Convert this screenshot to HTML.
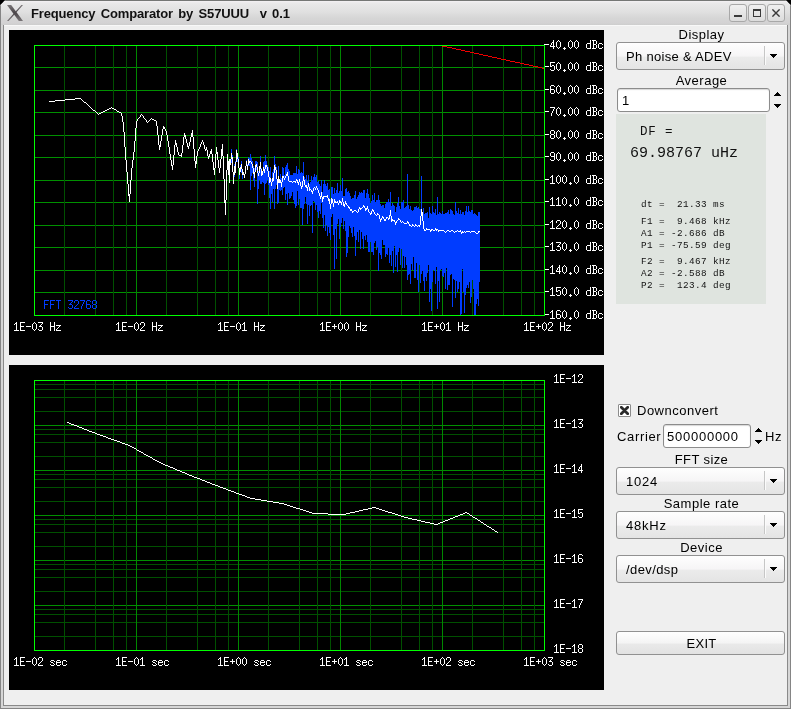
<!DOCTYPE html>
<html><head><meta charset="utf-8"><title>Frequency Comparator by S57UUU v 0.1</title>
<style>
html,body{margin:0;padding:0;background:#000;}
body{width:791px;height:709px;overflow:hidden;position:relative;font-family:"Liberation Sans",sans-serif;font-size:13px;color:#000;}
#win{position:absolute;left:0;top:0;width:791px;height:709px;background:#efefef;overflow:hidden;clip-path:polygon(0 5.5px,5.5px 0,785.5px 0,791px 5.5px,791px 709px,0 709px);}
#tb{position:absolute;left:0;top:0;width:791px;height:25px;background:linear-gradient(#f0eef0 1px,#e8e8e8 4px,#e0e0e0 12px,#d6d6d6 18px,#d3d2d3 23px,#cdcdcd 25px);}
.b{position:absolute;}
.cv{position:absolute;display:block;}
#title{position:absolute;left:30.7px;top:6px;font-weight:bold;font-size:13px;line-height:15px;white-space:pre;letter-spacing:-0.15px;word-spacing:1.9px;color:#111;will-change:transform;}
.wb{position:absolute;top:4px;width:16px;height:16px;border:1px solid #a8a8a8;border-radius:3px;background:linear-gradient(#f0f0f0,#dcdcdc);}
.lab{position:absolute;white-space:pre;line-height:15px;height:15px;will-change:transform;}
.ctr{left:616.5px;width:169px;text-align:center;}
.combo{position:absolute;left:616px;width:167px;height:26px;border:1px solid #919191;border-radius:3px;background:linear-gradient(#fefefe 0,#f6f5f6 50%,#ebebeb 55%,#e4e4e4 100%);}
.combo .t{position:absolute;left:8.8px;top:6px;line-height:15px;white-space:pre;will-change:transform;}
.combo .sep{position:absolute;left:147px;top:3px;width:1px;height:19px;background:#c6c6c6;border-right:1px solid #fbfbfb;}
.combo .ar{position:absolute;left:153px;top:11px;width:7px;height:4px;}
.inp{position:absolute;height:22px;border:1px solid #8c8c8c;border-radius:3px;background:#fff;box-shadow:inset 0 1px 1px #d8d8d8;}
.inp .t{position:absolute;left:4px;top:4px;line-height:15px;white-space:pre;will-change:transform;}
.up,.dn{position:absolute;width:7px;height:4px;}
#info{position:absolute;left:616px;top:114px;width:150px;height:190px;background:#dfe4df;font-family:"Liberation Mono",monospace;color:#111;}
#info div{position:absolute;white-space:pre;will-change:transform;}
.m10{font-size:9.3px;letter-spacing:0.42px;line-height:12px;left:25px;}
</style></head><body>
<svg width="0" height="0" style="position:absolute"><defs><path id="g1" d="M2 2h1v1h-1zM1 3h1v1h-1zM3 3h1v1h-1zM0 4h1v1h-1zM4 4h1v1h-1zM0 5h1v1h-1zM4 5h1v1h-1zM0 6h1v1h-1zM4 6h1v1h-1zM0 7h1v1h-1zM4 7h1v1h-1zM0 8h1v1h-1zM4 8h1v1h-1zM1 9h1v1h-1zM3 9h1v1h-1zM2 10h1v1h-1z"/><path id="g2" d="M2 2h1v1h-1zM1 3h2v1h-2zM0 4h1v1h-1zM2 4h1v1h-1zM2 5h1v1h-1zM2 6h1v1h-1zM2 7h1v1h-1zM2 8h1v1h-1zM2 9h1v1h-1zM0 10h5v1h-5z"/><path id="g3" d="M1 2h3v1h-3zM0 3h1v1h-1zM4 3h1v1h-1zM0 4h1v1h-1zM4 4h1v1h-1zM4 5h1v1h-1zM3 6h1v1h-1zM2 7h1v1h-1zM1 8h1v1h-1zM0 9h1v1h-1zM0 10h5v1h-5z"/><path id="g4" d="M0 2h5v1h-5zM4 3h1v1h-1zM3 4h1v1h-1zM2 5h1v1h-1zM1 6h3v1h-3zM4 7h1v1h-1zM4 8h1v1h-1zM0 9h1v1h-1zM4 9h1v1h-1zM1 10h3v1h-3z"/><path id="g5" d="M3 2h1v1h-1zM3 3h1v1h-1zM2 4h2v1h-2zM1 5h1v1h-1zM3 5h1v1h-1zM1 6h1v1h-1zM3 6h1v1h-1zM0 7h1v1h-1zM3 7h1v1h-1zM0 8h5v1h-5zM3 9h1v1h-1zM3 10h1v1h-1z"/><path id="g6" d="M0 2h5v1h-5zM0 3h1v1h-1zM0 4h1v1h-1zM0 5h1v1h-1zM2 5h2v1h-2zM0 6h2v1h-2zM4 6h1v1h-1zM4 7h1v1h-1zM4 8h1v1h-1zM0 9h1v1h-1zM4 9h1v1h-1zM1 10h3v1h-3z"/><path id="g7" d="M1 2h3v1h-3zM0 3h1v1h-1zM4 3h1v1h-1zM0 4h1v1h-1zM0 5h1v1h-1zM0 6h4v1h-4zM0 7h1v1h-1zM4 7h1v1h-1zM0 8h1v1h-1zM4 8h1v1h-1zM0 9h1v1h-1zM4 9h1v1h-1zM1 10h3v1h-3z"/><path id="g8" d="M0 2h5v1h-5zM4 3h1v1h-1zM3 4h1v1h-1zM3 5h1v1h-1zM2 6h1v1h-1zM2 7h1v1h-1zM1 8h1v1h-1zM1 9h1v1h-1zM1 10h1v1h-1z"/><path id="g9" d="M1 2h3v1h-3zM0 3h1v1h-1zM4 3h1v1h-1zM0 4h1v1h-1zM4 4h1v1h-1zM0 5h1v1h-1zM4 5h1v1h-1zM1 6h3v1h-3zM0 7h1v1h-1zM4 7h1v1h-1zM0 8h1v1h-1zM4 8h1v1h-1zM0 9h1v1h-1zM4 9h1v1h-1zM1 10h3v1h-3z"/><path id="g10" d="M1 2h3v1h-3zM0 3h1v1h-1zM4 3h1v1h-1zM0 4h1v1h-1zM4 4h1v1h-1zM0 5h1v1h-1zM4 5h1v1h-1zM1 6h4v1h-4zM4 7h1v1h-1zM4 8h1v1h-1zM0 9h1v1h-1zM4 9h1v1h-1zM1 10h3v1h-3z"/><path id="g11" d="M2 9h1v1h-1zM1 10h3v1h-3zM2 11h1v1h-1z"/><path id="g12" d="M0 6h5v1h-5z"/><path id="g13" d="M2 4h1v1h-1zM2 5h1v1h-1zM0 6h5v1h-5zM2 7h1v1h-1zM2 8h1v1h-1z"/><path id="g14" d="M0 2h5v1h-5zM0 3h1v1h-1zM0 4h1v1h-1zM0 5h1v1h-1zM0 6h4v1h-4zM0 7h1v1h-1zM0 8h1v1h-1zM0 9h1v1h-1zM0 10h5v1h-5z"/><path id="g15" d="M0 2h5v1h-5zM0 3h1v1h-1zM0 4h1v1h-1zM0 5h1v1h-1zM0 6h4v1h-4zM0 7h1v1h-1zM0 8h1v1h-1zM0 9h1v1h-1zM0 10h1v1h-1z"/><path id="g16" d="M0 2h1v1h-1zM4 2h1v1h-1zM0 3h1v1h-1zM4 3h1v1h-1zM0 4h1v1h-1zM4 4h1v1h-1zM0 5h1v1h-1zM4 5h1v1h-1zM0 6h5v1h-5zM0 7h1v1h-1zM4 7h1v1h-1zM0 8h1v1h-1zM4 8h1v1h-1zM0 9h1v1h-1zM4 9h1v1h-1zM0 10h1v1h-1zM4 10h1v1h-1z"/><path id="g17" d="M0 2h5v1h-5zM2 3h1v1h-1zM2 4h1v1h-1zM2 5h1v1h-1zM2 6h1v1h-1zM2 7h1v1h-1zM2 8h1v1h-1zM2 9h1v1h-1zM2 10h1v1h-1z"/><path id="g18" d="M0 2h4v1h-4zM1 3h1v1h-1zM4 3h1v1h-1zM1 4h1v1h-1zM4 4h1v1h-1zM1 5h1v1h-1zM4 5h1v1h-1zM1 6h3v1h-3zM1 7h1v1h-1zM4 7h1v1h-1zM1 8h1v1h-1zM4 8h1v1h-1zM1 9h1v1h-1zM4 9h1v1h-1zM0 10h4v1h-4z"/><path id="g19" d="M4 2h1v1h-1zM4 3h1v1h-1zM4 4h1v1h-1zM1 5h4v1h-4zM0 6h1v1h-1zM4 6h1v1h-1zM0 7h1v1h-1zM4 7h1v1h-1zM0 8h1v1h-1zM4 8h1v1h-1zM0 9h1v1h-1zM4 9h1v1h-1zM1 10h4v1h-4z"/><path id="g20" d="M1 5h3v1h-3zM0 6h1v1h-1zM4 6h1v1h-1zM0 7h1v1h-1zM0 8h1v1h-1zM0 9h1v1h-1zM4 9h1v1h-1zM1 10h3v1h-3z"/><path id="g21" d="M0 5h5v1h-5zM3 6h1v1h-1zM2 7h1v1h-1zM1 8h1v1h-1zM0 9h1v1h-1zM0 10h5v1h-5z"/><path id="g22" d="M1 5h3v1h-3zM0 6h1v1h-1zM4 6h1v1h-1zM1 7h2v1h-2zM3 8h1v1h-1zM0 9h1v1h-1zM4 9h1v1h-1zM1 10h3v1h-3z"/><path id="g23" d="M1 5h3v1h-3zM0 6h1v1h-1zM4 6h1v1h-1zM0 7h5v1h-5zM0 8h1v1h-1zM0 9h1v1h-1zM4 9h1v1h-1zM1 10h3v1h-3z"/></defs></svg>
<div id="win">
 <div id="tb"></div>
 <!-- frame -->
 <div class="b" style="left:0;top:0;width:791px;height:1px;background:#757775"></div>
 <div class="b" style="left:0;top:1px;width:791px;height:1px;background:#f1eff1"></div>
 <div class="b" style="left:0;top:0;width:1px;height:709px;background:#858585"></div>
 <div class="b" style="left:1px;top:25px;width:2px;height:683px;background:#d6d6d6"></div>
 <div class="b" style="left:3px;top:25px;width:1px;height:681px;background:#8a8a8a"></div>
 <div class="b" style="left:790px;top:0;width:1px;height:709px;background:#858585"></div>
 <div class="b" style="left:788px;top:25px;width:2px;height:683px;background:#d6d6d6"></div>
 <div class="b" style="left:787px;top:25px;width:1px;height:681px;background:#8a8a8a"></div>
 <div class="b" style="left:0;top:708px;width:791px;height:1px;background:#858585"></div>
 <div class="b" style="left:1px;top:706px;width:789px;height:2px;background:#d6d6d6"></div>
 <div class="b" style="left:3px;top:705px;width:785px;height:1px;background:#8a8a8a"></div>
 <div class="b" style="left:4px;top:25px;width:783px;height:1px;background:#f8f8f8"></div>
 <!-- X icon -->
 <svg class="b" style="left:7px;top:5px" width="16" height="16" viewBox="0 0 16 16">
  <defs><linearGradient id="xg" x1="0" y1="0" x2="0" y2="1"><stop offset="0" stop-color="#7a7678"/><stop offset="0.5" stop-color="#4a4548"/><stop offset="1" stop-color="#7a7678"/></linearGradient></defs>
  <path d="M0 0H4.2L16 16H11.8Z" fill="url(#xg)"/>
  <path d="M14.4 0H16L1.6 16H0Z" fill="url(#xg)"/>
 </svg>
 <div id="title">Frequency Comparator by S57UUU  v 0.1</div>
 <!-- window buttons -->
 <div class="wb" style="left:729px"><div class="b" style="left:4px;top:10px;width:8px;height:2px;background:#3a3a3a"></div></div>
 <div class="wb" style="left:748px"><div class="b" style="left:4px;top:4px;width:6px;height:5px;border:1px solid #3a3a3a;border-top-width:2px"></div></div>
 <div class="wb" style="left:767px"><svg class="b" style="left:4px;top:4px" width="8" height="8" viewBox="0 0 8 8"><path d="M0.4 0.4L7.6 7.6M7.6 0.4L0.4 7.6" stroke="#3a3a3a" stroke-width="1.4" fill="none"/></svg></div>

<svg class="cv" style="left:9px;top:30px" width="595" height="325" viewBox="0 0 595 325" shape-rendering="crispEdges"><rect width="595" height="325" fill="#000"/><path fill="#009000" d="M25 37h510v1h-510zM25 60h510v1h-510zM25 82h510v1h-510zM25 105h510v1h-510zM25 127h510v1h-510zM25 150h510v1h-510zM25 172h510v1h-510zM25 195h510v1h-510zM25 217h510v1h-510zM25 240h510v1h-510zM25 262h510v1h-510z"/><path fill="#005000" d="M55 15h1v270h-1zM86 15h1v270h-1zM104 15h1v270h-1zM117 15h1v270h-1zM157 15h1v270h-1zM188 15h1v270h-1zM206 15h1v270h-1zM219 15h1v270h-1zM259 15h1v270h-1zM290 15h1v270h-1zM308 15h1v270h-1zM321 15h1v270h-1zM361 15h1v270h-1zM392 15h1v270h-1zM410 15h1v270h-1zM423 15h1v270h-1zM463 15h1v270h-1zM494 15h1v270h-1zM512 15h1v270h-1zM525 15h1v270h-1z"/><path fill="#008800" d="M127 15h1v270h-1zM229 15h1v270h-1zM331 15h1v270h-1zM433 15h1v270h-1z"/><path fill="#003cff" d="M40 71v1h1v-1zM41 71v1h1v-1zM42 71v1h1v-1zM43 71v1h1v-1zM44 71v1h1v-1zM45 71v1h1v-1zM46 70v1h1v-1zM47 70v1h1v-1zM48 70v1h1v-1zM49 70v1h1v-1zM50 70v1h1v-1zM51 70v1h1v-1zM52 70v1h1v-1zM53 70v1h1v-1zM54 70v1h1v-1zM55 70v1h1v-1zM56 69v1h1v-1zM57 69v1h1v-1zM58 69v1h1v-1zM59 69v1h1v-1zM60 69v1h1v-1zM61 69v1h1v-1zM62 69v1h1v-1zM63 69v1h1v-1zM64 69v1h1v-1zM65 69v1h1v-1zM66 68v1h1v-1zM67 68v1h1v-1zM68 68v1h1v-1zM69 68v1h1v-1zM70 68v1h1v-1zM71 68v1h1v-1zM72 69v1h1v-1zM73 70v1h1v-1zM74 71v1h1v-1zM75 72v1h1v-1zM76 72v1h1v-1zM77 73v1h1v-1zM78 74v1h1v-1zM79 75v1h1v-1zM80 76v1h1v-1zM81 77v1h1v-1zM82 78v1h1v-1zM83 79v1h1v-1zM84 80v1h1v-1zM85 80v1h1v-1zM86 81v1h1v-1zM87 82v1h1v-1zM88 83v1h1v-1zM89 84v1h1v-1zM90 83v1h1v-1zM91 83v1h1v-1zM92 82v1h1v-1zM93 82v1h1v-1zM94 81v1h1v-1zM95 81v1h1v-1zM96 80v1h1v-1zM97 80v1h1v-1zM98 79v1h1v-1zM99 79v1h1v-1zM100 78v1h1v-1zM101 78v1h1v-1zM102 77v1h1v-1zM103 78v1h1v-1zM104 78v1h1v-1zM105 79v1h1v-1zM106 79v1h1v-1zM107 80v1h1v-1zM108 81v1h1v-1zM109 81v1h1v-1zM110 82v1h1v-1zM111 82v1h1v-1zM112 83v3h1v-3zM113 86v6h1v-6zM114 92v10h1v-10zM115 102v15h1v-15zM116 117v13h1v-13zM117 130v12h1v-12zM118 142v12h1v-12zM119 154v12h1v-12zM120 164v8h1v-8zM121 150v14h1v-14zM122 138v12h1v-12zM123 130v8h1v-8zM124 122v8h1v-8zM125 111v11h1v-11zM126 98v13h1v-13zM127 91v7h1v-7zM128 89v2h1v-2zM129 88v1h1v-1zM130 87v1h1v-1zM131 85v2h1v-2zM132 84v1h1v-1zM133 85v1h1v-1zM134 86v2h1v-2zM135 88v1h1v-1zM136 89v1h1v-1zM137 90v2h1v-2zM138 92v1h1v-1zM139 91v1h1v-1zM140 90v1h1v-1zM141 89v1h1v-1zM142 88v1h1v-1zM143 89v1h1v-1zM144 89v1h1v-1zM145 90v1h1v-1zM146 90v1h1v-1zM147 91v5h1v-5zM148 96v9h1v-9zM149 105v10h1v-10zM150 115v5h1v-5zM151 111v6h1v-6zM152 105v6h1v-6zM153 99v6h1v-6zM154 96v3h1v-3zM155 97v2h1v-2zM156 99v2h1v-2zM157 101v4h1v-4zM158 105v6h1v-6zM159 111v6h1v-6zM160 117v7h1v-7zM161 124v6h1v-6zM162 130v6h1v-6zM163 135v5h1v-5zM164 125v10h1v-10zM165 115v10h1v-10zM166 110v5h1v-5zM167 113v4h1v-4zM168 117v5h1v-5zM169 122v3h1v-3zM170 125v1h1v-1zM171 125v1h1v-1zM172 123v4h1v-4zM173 115v8h1v-8zM174 107v8h1v-8zM175 103v4h1v-4zM176 105v4h1v-4zM177 109v4h1v-4zM178 113v4h1v-4zM179 116v3h1v-3zM180 112v4h1v-4zM181 107v5h1v-5zM182 103v4h1v-4zM183 100v7h1v-7zM184 107v12h1v-12zM185 119v12h1v-12zM186 131v7h1v-7zM187 126v8h1v-8zM188 121v5h1v-5zM189 119v2h1v-2zM190 117v2h1v-2zM191 114v3h1v-3zM192 112v2h1v-2zM193 110v2h1v-2zM194 112v3h1v-3zM195 115v4h1v-4zM196 119v2h1v-2zM197 117v3h1v-3zM198 120v6h1v-6zM199 126v3h1v-3zM200 124v3h1v-3zM201 121v3h1v-3zM202 119v5h1v-5zM203 124v8h1v-8zM204 132v8h1v-8zM205 138v7h1v-7zM206 124v14h1v-14zM207 117v7h1v-7zM208 122v8h1v-8zM209 130v8h1v-8zM210 138v5h1v-5zM211 129v9h1v-9zM212 119v10h1v-10zM213 114v12h1v-12zM214 126v23h1v-23zM215 149v24h1v-24zM216 170v15h1v-15zM217 140v30h1v-30zM218 124v16h1v-16zM219 131v14h1v-14zM220 129v24h1v-24zM221 132v3h1v-3zM222 119v14h1v-14zM223 125v17h1v-17zM224 142v12h1v-12zM225 134v13h1v-13zM226 131v12h1v-12zM227 119v12h1v-12zM228 124v8h1v-8zM229 127v11h1v-11zM230 138v11h1v-11zM231 135v5h1v-5zM232 131v12h1v-12zM233 141v8h1v-8zM234 142v3h1v-3zM235 144v4h1v-4zM236 136v8h1v-8zM237 130v6h1v-6zM238 134v6h1v-6zM239 127v9h1v-9zM240 128v8h1v-8zM241 124v36h1v-36zM242 128v18h1v-18zM243 131v12h1v-12zM244 136v15h1v-15zM245 138v19h1v-19zM246 131v11h1v-11zM247 131v9h1v-9zM248 132v42h1v-42zM249 141v18h1v-18zM250 136v14h1v-14zM251 126v28h1v-28zM252 138v16h1v-16zM253 141v11h1v-11zM254 132v21h1v-21zM255 131v34h1v-34zM256 125v29h1v-29zM257 131v22h1v-22zM258 135v15h1v-15zM259 137v18h1v-18zM260 141v27h1v-27zM261 137v42h1v-42zM262 149v15h1v-15zM263 142v30h1v-30zM264 139v20h1v-20zM265 126v53h1v-53zM266 134v25h1v-25zM267 137v18h1v-18zM268 149v25h1v-25zM269 136v37h1v-37zM270 149v11h1v-11zM271 144v17h1v-17zM272 148v12h1v-12zM273 137v28h1v-28zM274 138v20h1v-20zM275 145v12h1v-12zM276 137v33h1v-33zM277 135v29h1v-29zM278 133v42h1v-42zM279 139v24h1v-24zM280 141v28h1v-28zM281 145v23h1v-23zM282 145v21h1v-21zM283 145v17h1v-17zM284 143v27h1v-27zM285 143v31h1v-31zM286 143v35h1v-35zM287 136v40h1v-40zM288 144v17h1v-17zM289 139v36h1v-36zM290 140v29h1v-29zM291 143v35h1v-35zM292 142v36h1v-36zM293 143v52h1v-52zM294 132v47h1v-47zM295 147v27h1v-27zM296 149v18h1v-18zM297 145v29h1v-29zM298 151v43h1v-43zM299 145v30h1v-30zM300 154v32h1v-32zM301 152v24h1v-24zM302 146v29h1v-29zM303 150v53h1v-53zM304 147v24h1v-24zM305 144v28h1v-28zM306 147v33h1v-33zM307 145v30h1v-30zM308 152v30h1v-30zM309 151v37h1v-37zM310 154v27h1v-27zM311 156v28h1v-28zM312 150v23h1v-23zM313 162v26h1v-26zM314 154v44h1v-44zM315 150v35h1v-35zM316 154v47h1v-47zM317 156v39h1v-39zM318 153v53h1v-53zM319 160v37h1v-37zM320 159v44h1v-44zM321 169v41h1v-41zM322 157v30h1v-30zM323 157v27h1v-27zM324 164v41h1v-41zM325 158v81h1v-81zM326 163v36h1v-36zM327 160v69h1v-69zM328 153v41h1v-41zM329 163v26h1v-26zM330 161v48h1v-48zM331 155v42h1v-42zM332 161v32h1v-32zM333 148v40h1v-40zM334 166v33h1v-33zM335 166v25h1v-25zM336 159v42h1v-42zM337 158v69h1v-69zM338 162v61h1v-61zM339 161v46h1v-46zM340 163v33h1v-33zM341 166v32h1v-32zM342 169v34h1v-34zM343 168v39h1v-39zM344 168v29h1v-29zM345 165v41h1v-41zM346 161v65h1v-65zM347 169v41h1v-41zM348 167v35h1v-35zM349 165v47h1v-47zM350 162v38h1v-38zM351 163v56h1v-56zM352 162v40h1v-40zM353 163v46h1v-46zM354 160v59h1v-59zM355 160v46h1v-46zM356 168v42h1v-42zM357 163v42h1v-42zM358 159v53h1v-53zM359 164v58h1v-58zM360 168v54h1v-54zM361 173v39h1v-39zM362 171v51h1v-51zM363 165v57h1v-57zM364 170v55h1v-55zM365 163v50h1v-50zM366 172v39h1v-39zM367 170v50h1v-50zM368 170v47h1v-47zM369 165v76h1v-76zM370 170v53h1v-53zM371 174v51h1v-51zM372 176v53h1v-53zM373 175v35h1v-35zM374 175v40h1v-40zM375 178v37h1v-37zM376 174v53h1v-53zM377 172v52h1v-52zM378 172v53h1v-53zM379 169v49h1v-49zM380 172v61h1v-61zM381 162v63h1v-63zM382 176v60h1v-60zM383 173v48h1v-48zM384 175v68h1v-68zM385 176v40h1v-40zM386 182v55h1v-55zM387 177v48h1v-48zM388 173v69h1v-69zM389 167v55h1v-55zM390 176v42h1v-42zM391 179v56h1v-56zM392 172v47h1v-47zM393 172v66h1v-66zM394 170v56h1v-56zM395 178v60h1v-60zM396 177v50h1v-50zM397 176v59h1v-59zM398 144v106h1v-106zM399 175v70h1v-70zM400 179v65h1v-65zM401 176v78h1v-78zM402 180v54h1v-54zM403 181v59h1v-59zM404 180v47h1v-47zM405 177v71h1v-71zM406 177v71h1v-71zM407 176v57h1v-57zM408 178v72h1v-72zM409 177v85h1v-85zM410 179v56h1v-56zM411 179v74h1v-74zM412 146v98h1v-98zM413 182v59h1v-59zM414 178v73h1v-73zM415 184v77h1v-77zM416 183v64h1v-64zM417 183v68h1v-68zM418 182v61h1v-61zM419 188v47h1v-47zM420 177v95h1v-95zM421 183v76h1v-76zM422 184v97h1v-97zM423 176v76h1v-76zM424 182v58h1v-58zM425 183v58h1v-58zM426 179v75h1v-75zM427 185v52h1v-52zM428 167v112h1v-112zM429 184v67h1v-67zM430 182v90h1v-90zM431 183v57h1v-57zM432 184v55h1v-55zM433 181v65h1v-65zM434 184v63h1v-63zM435 184v59h1v-59zM436 183v76h1v-76zM437 183v55h1v-55zM438 182v78h1v-78zM439 180v75h1v-75zM440 184v71h1v-71zM441 179v66h1v-66zM442 180v64h1v-64zM443 181v96h1v-96zM444 184v65h1v-65zM445 185v65h1v-65zM446 172v96h1v-96zM447 181v70h1v-70zM448 183v79h1v-79zM449 178v81h1v-81zM450 184v68h1v-68zM451 180v106h1v-106zM452 184v100h1v-100zM453 182v57h1v-57zM454 182v80h1v-80zM455 185v98h1v-98zM456 181v84h1v-84zM457 176v82h1v-82zM458 182v73h1v-73zM459 176v82h1v-82zM460 181v71h1v-71zM461 182v91h1v-91zM462 180v87h1v-87zM463 180v70h1v-70zM464 184v75h1v-75zM465 183v103h1v-103zM466 184v102h1v-102zM467 185v89h1v-89zM468 186v83h1v-83zM469 182v94h1v-94zM470 182v70h1v-70z"/><path fill="#fff" d="M40 71v1h1v-1zM41 71v1h1v-1zM42 71v1h1v-1zM43 71v1h1v-1zM44 71v1h1v-1zM45 71v1h1v-1zM46 70v1h1v-1zM47 70v1h1v-1zM48 70v1h1v-1zM49 70v1h1v-1zM50 70v1h1v-1zM51 70v1h1v-1zM52 70v1h1v-1zM53 70v1h1v-1zM54 70v1h1v-1zM55 70v1h1v-1zM56 69v1h1v-1zM57 69v1h1v-1zM58 69v1h1v-1zM59 69v1h1v-1zM60 69v1h1v-1zM61 69v1h1v-1zM62 69v1h1v-1zM63 69v1h1v-1zM64 69v1h1v-1zM65 69v1h1v-1zM66 68v1h1v-1zM67 68v1h1v-1zM68 68v1h1v-1zM69 68v1h1v-1zM70 68v1h1v-1zM71 68v1h1v-1zM72 69v1h1v-1zM73 70v1h1v-1zM74 71v1h1v-1zM75 72v1h1v-1zM76 72v1h1v-1zM77 73v1h1v-1zM78 74v1h1v-1zM79 75v1h1v-1zM80 76v1h1v-1zM81 77v1h1v-1zM82 78v1h1v-1zM83 79v1h1v-1zM84 80v1h1v-1zM85 80v1h1v-1zM86 81v1h1v-1zM87 82v1h1v-1zM88 83v1h1v-1zM89 84v1h1v-1zM90 83v1h1v-1zM91 83v1h1v-1zM92 82v1h1v-1zM93 82v1h1v-1zM94 81v1h1v-1zM95 81v1h1v-1zM96 80v1h1v-1zM97 80v1h1v-1zM98 79v1h1v-1zM99 79v1h1v-1zM100 78v1h1v-1zM101 78v1h1v-1zM102 77v1h1v-1zM103 78v1h1v-1zM104 78v1h1v-1zM105 79v1h1v-1zM106 79v1h1v-1zM107 80v1h1v-1zM108 81v1h1v-1zM109 81v1h1v-1zM110 82v1h1v-1zM111 82v1h1v-1zM112 83v3h1v-3zM113 86v6h1v-6zM114 92v10h1v-10zM115 102v15h1v-15zM116 117v13h1v-13zM117 130v12h1v-12zM118 142v12h1v-12zM119 154v12h1v-12zM120 164v8h1v-8zM121 150v14h1v-14zM122 138v12h1v-12zM123 130v8h1v-8zM124 122v8h1v-8zM125 111v11h1v-11zM126 98v13h1v-13zM127 91v7h1v-7zM128 89v2h1v-2zM129 88v1h1v-1zM130 87v1h1v-1zM131 85v2h1v-2zM132 84v1h1v-1zM133 85v1h1v-1zM134 86v2h1v-2zM135 88v1h1v-1zM136 89v1h1v-1zM137 90v2h1v-2zM138 92v1h1v-1zM139 91v1h1v-1zM140 90v1h1v-1zM141 89v1h1v-1zM142 88v1h1v-1zM143 89v1h1v-1zM144 89v1h1v-1zM145 90v1h1v-1zM146 90v1h1v-1zM147 91v5h1v-5zM148 96v9h1v-9zM149 105v10h1v-10zM150 115v5h1v-5zM151 111v6h1v-6zM152 105v6h1v-6zM153 99v6h1v-6zM154 96v3h1v-3zM155 97v2h1v-2zM156 99v2h1v-2zM157 101v4h1v-4zM158 105v6h1v-6zM159 111v6h1v-6zM160 117v7h1v-7zM161 124v6h1v-6zM162 130v6h1v-6zM163 135v5h1v-5zM164 125v10h1v-10zM165 115v10h1v-10zM166 110v5h1v-5zM167 113v4h1v-4zM168 117v5h1v-5zM169 122v3h1v-3zM170 125v1h1v-1zM171 125v1h1v-1zM172 123v4h1v-4zM173 115v8h1v-8zM174 107v8h1v-8zM175 103v4h1v-4zM176 105v4h1v-4zM177 109v4h1v-4zM178 113v4h1v-4zM179 116v3h1v-3zM180 112v4h1v-4zM181 107v5h1v-5zM182 103v4h1v-4zM183 100v7h1v-7zM184 107v12h1v-12zM185 119v12h1v-12zM186 131v7h1v-7zM187 126v8h1v-8zM188 121v5h1v-5zM189 119v2h1v-2zM190 117v2h1v-2zM191 114v3h1v-3zM192 112v2h1v-2zM193 110v2h1v-2zM194 112v3h1v-3zM195 115v4h1v-4zM196 119v2h1v-2zM197 117v3h1v-3zM198 120v6h1v-6zM199 126v3h1v-3zM200 124v3h1v-3zM201 121v3h1v-3zM202 119v5h1v-5zM203 124v8h1v-8zM204 132v8h1v-8zM205 138v7h1v-7zM206 124v14h1v-14zM207 117v7h1v-7zM208 122v8h1v-8zM209 130v8h1v-8zM210 138v5h1v-5zM211 129v9h1v-9zM212 119v10h1v-10zM213 114v12h1v-12zM214 126v23h1v-23zM215 149v24h1v-24zM216 170v15h1v-15zM217 140v30h1v-30zM218 124v16h1v-16zM219 131v14h1v-14zM220 129v24h1v-24zM221 129v6h1v-6zM222 123v6h1v-6zM223 127v15h1v-15zM224 142v12h1v-12zM225 136v9h1v-9zM226 132v11h1v-11zM227 120v12h1v-12zM228 123v6h1v-6zM229 129v9h1v-9zM230 138v7h1v-7zM231 137v5h1v-5zM232 134v5h1v-5zM233 139v6h1v-6zM234 142v3h1v-3zM235 144v4h1v-4zM236 136v8h1v-8zM237 131v5h1v-5zM238 135v5h1v-5zM239 129v6h1v-6zM240 131v2h1v-2zM241 131v1h1v-1zM242 132v2h1v-2zM243 134v4h1v-4zM244 138v6h1v-6zM245 142v6h1v-6zM246 135v7h1v-7zM247 134v3h1v-3zM248 137v6h1v-6zM249 143v3h1v-3zM250 136v7h1v-7zM251 132v7h1v-7zM252 139v7h1v-7zM253 141v4h1v-4zM254 137v4h1v-4zM255 139v4h1v-4zM256 135v4h1v-4zM257 135v2h1v-2zM258 137v4h1v-4zM259 141v6h1v-6zM260 147v6h1v-6zM261 148v4h1v-4zM262 152v4h1v-4zM263 148v4h1v-4zM264 143v8h1v-8zM265 135v8h1v-8zM266 137v3h1v-3zM267 140v9h1v-9zM268 149v10h1v-10zM269 146v7h1v-7zM270 149v4h1v-4zM271 150v3h1v-3zM272 152v5h1v-5zM273 146v6h1v-6zM274 146v2h1v-2zM275 148v2h1v-2zM276 146v2h1v-2zM277 144v2h1v-2zM278 142v4h1v-4zM279 146v5h1v-5zM280 151v1h1v-1zM281 151v1h1v-1zM282 151v1h1v-1zM283 152v1h1v-1zM284 151v1h1v-1zM285 151v1h1v-1zM286 151v2h1v-2zM287 149v2h1v-2zM288 150v3h1v-3zM289 152v3h1v-3zM290 149v3h1v-3zM291 152v4h1v-4zM292 156v3h1v-3zM293 151v6h1v-6zM294 146v5h1v-5zM295 150v5h1v-5zM296 155v2h1v-2zM297 155v3h1v-3zM298 157v4h1v-4zM299 153v4h1v-4zM300 157v4h1v-4zM301 159v1h1v-1zM302 160v2h1v-2zM303 161v3h1v-3zM304 158v3h1v-3zM305 157v1h1v-1zM306 158v2h1v-2zM307 156v2h1v-2zM308 158v2h1v-2zM309 160v3h1v-3zM310 163v3h1v-3zM311 166v3h1v-3zM312 162v5h1v-5zM313 167v5h1v-5zM314 166v3h1v-3zM315 166v1h1v-1zM316 166v1h1v-1zM317 166v1h1v-1zM318 165v3h1v-3zM319 168v3h1v-3zM320 169v5h1v-5zM321 174v5h1v-5zM322 168v6h1v-6zM323 169v4h1v-4zM324 173v4h1v-4zM325 169v4h1v-4zM326 171v2h1v-2zM327 172v1h1v-1zM328 171v2h1v-2zM329 173v2h1v-2zM330 170v3h1v-3zM331 171v2h1v-2zM332 172v3h1v-3zM333 168v4h1v-4zM334 172v4h1v-4zM335 174v3h1v-3zM336 171v3h1v-3zM337 173v2h1v-2zM338 175v1h1v-1zM339 176v2h1v-2zM340 177v2h1v-2zM341 179v2h1v-2zM342 179v2h1v-2zM343 181v2h1v-2zM344 181v1h1v-1zM345 180v1h1v-1zM346 180v1h1v-1zM347 181v1h1v-1zM348 182v1h1v-1zM349 179v3h1v-3zM350 177v2h1v-2zM351 178v2h1v-2zM352 178v1h1v-1zM353 177v1h1v-1zM354 175v2h1v-2zM355 176v2h1v-2zM356 178v3h1v-3zM357 178v2h1v-2zM358 176v3h1v-3zM359 179v3h1v-3zM360 182v1h1v-1zM361 183v2h1v-2zM362 181v3h1v-3zM363 179v2h1v-2zM364 180v2h1v-2zM365 182v2h1v-2zM366 184v1h1v-1zM367 185v1h1v-1zM368 183v2h1v-2zM369 184v1h1v-1zM370 185v4h1v-4zM371 189v3h1v-3zM372 188v2h1v-2zM373 186v2h1v-2zM374 187v2h1v-2zM375 189v2h1v-2zM376 189v2h1v-2zM377 187v2h1v-2zM378 187v1h1v-1zM379 188v2h1v-2zM380 185v4h1v-4zM381 180v6h1v-6zM382 186v6h1v-6zM383 189v2h1v-2zM384 190v1h1v-1zM385 190v2h1v-2zM386 192v3h1v-3zM387 191v2h1v-2zM388 190v1h1v-1zM389 188v2h1v-2zM390 189v1h1v-1zM391 190v2h1v-2zM392 192v1h1v-1zM393 191v1h1v-1zM394 192v1h1v-1zM395 193v1h1v-1zM396 193v1h1v-1zM397 193v1h1v-1zM398 191v2h1v-2zM399 192v2h1v-2zM400 194v2h1v-2zM401 195v1h1v-1zM402 196v1h1v-1zM403 194v2h1v-2zM404 195v1h1v-1zM405 196v1h1v-1zM406 194v2h1v-2zM407 195v1h1v-1zM408 196v1h1v-1zM409 195v1h1v-1zM410 195v2h1v-2zM411 186v9h1v-9zM412 179v7h1v-7zM413 182v9h1v-9zM414 191v8h1v-8zM415 199v2h1v-2zM416 200v1h1v-1zM417 198v2h1v-2zM418 199v1h1v-1zM419 199v1h1v-1zM420 199v1h1v-1zM421 200v2h1v-2zM422 199v2h1v-2zM423 199v1h1v-1zM424 200v1h1v-1zM425 200v1h1v-1zM426 198v2h1v-2zM427 199v2h1v-2zM428 199v1h1v-1zM429 200v2h1v-2zM430 200v1h1v-1zM431 200v1h1v-1zM432 200v1h1v-1zM433 200v1h1v-1zM434 200v1h1v-1zM435 201v1h1v-1zM436 202v1h1v-1zM437 201v1h1v-1zM438 200v1h1v-1zM439 200v1h1v-1zM440 201v1h1v-1zM441 201v1h1v-1zM442 200v1h1v-1zM443 200v1h1v-1zM444 201v1h1v-1zM445 202v1h1v-1zM446 201v1h1v-1zM447 201v1h1v-1zM448 200v1h1v-1zM449 201v1h1v-1zM450 201v1h1v-1zM451 200v2h1v-2zM452 202v2h1v-2zM453 201v2h1v-2zM454 202v1h1v-1zM455 201v1h1v-1zM456 202v1h1v-1zM457 201v1h1v-1zM458 201v1h1v-1zM459 201v1h1v-1zM460 201v1h1v-1zM461 202v1h1v-1zM462 201v1h1v-1zM463 201v1h1v-1zM464 201v1h1v-1zM465 201v1h1v-1zM466 202v1h1v-1zM467 203v1h1v-1zM468 203v1h1v-1zM469 201v2h1v-2zM470 201v1h1v-1z"/><path fill="#f00000" d="M433 16h5v1h-5zM438 17h5v1h-5zM443 18h4v1h-4zM447 19h5v1h-5zM452 20h4v1h-4zM456 21h5v1h-5zM461 22h4v1h-4zM465 23h5v1h-5zM470 24h4v1h-4zM474 25h5v1h-5zM479 26h4v1h-4zM483 27h5v1h-5zM488 28h4v1h-4zM492 29h5v1h-5zM497 30h4v1h-4zM501 31h5v1h-5zM506 32h5v1h-5zM511 33h4v1h-4zM515 34h5v1h-5zM520 35h4v1h-4zM524 36h5v1h-5zM529 37h4v1h-4zM533 38h2v1h-2z"/><g fill="#fff"><use href="#g12" x="535" y="8"/><use href="#g5" x="541" y="8"/><use href="#g1" x="547" y="8"/><use href="#g11" x="553" y="8"/><use href="#g1" x="559" y="8"/><use href="#g1" x="565" y="8"/><use href="#g19" x="577" y="8"/><use href="#g18" x="583" y="8"/><use href="#g20" x="589" y="8"/><use href="#g12" x="535" y="30"/><use href="#g6" x="541" y="30"/><use href="#g1" x="547" y="30"/><use href="#g11" x="553" y="30"/><use href="#g1" x="559" y="30"/><use href="#g1" x="565" y="30"/><use href="#g19" x="577" y="30"/><use href="#g18" x="583" y="30"/><use href="#g20" x="589" y="30"/><use href="#g12" x="535" y="53"/><use href="#g7" x="541" y="53"/><use href="#g1" x="547" y="53"/><use href="#g11" x="553" y="53"/><use href="#g1" x="559" y="53"/><use href="#g1" x="565" y="53"/><use href="#g19" x="577" y="53"/><use href="#g18" x="583" y="53"/><use href="#g20" x="589" y="53"/><use href="#g12" x="535" y="75"/><use href="#g8" x="541" y="75"/><use href="#g1" x="547" y="75"/><use href="#g11" x="553" y="75"/><use href="#g1" x="559" y="75"/><use href="#g1" x="565" y="75"/><use href="#g19" x="577" y="75"/><use href="#g18" x="583" y="75"/><use href="#g20" x="589" y="75"/><use href="#g12" x="535" y="98"/><use href="#g9" x="541" y="98"/><use href="#g1" x="547" y="98"/><use href="#g11" x="553" y="98"/><use href="#g1" x="559" y="98"/><use href="#g1" x="565" y="98"/><use href="#g19" x="577" y="98"/><use href="#g18" x="583" y="98"/><use href="#g20" x="589" y="98"/><use href="#g12" x="535" y="120"/><use href="#g10" x="541" y="120"/><use href="#g1" x="547" y="120"/><use href="#g11" x="553" y="120"/><use href="#g1" x="559" y="120"/><use href="#g1" x="565" y="120"/><use href="#g19" x="577" y="120"/><use href="#g18" x="583" y="120"/><use href="#g20" x="589" y="120"/><use href="#g12" x="535" y="143"/><use href="#g2" x="541" y="143"/><use href="#g1" x="547" y="143"/><use href="#g1" x="553" y="143"/><use href="#g11" x="559" y="143"/><use href="#g1" x="565" y="143"/><use href="#g19" x="577" y="143"/><use href="#g18" x="583" y="143"/><use href="#g20" x="589" y="143"/><use href="#g12" x="535" y="165"/><use href="#g2" x="541" y="165"/><use href="#g2" x="547" y="165"/><use href="#g1" x="553" y="165"/><use href="#g11" x="559" y="165"/><use href="#g1" x="565" y="165"/><use href="#g19" x="577" y="165"/><use href="#g18" x="583" y="165"/><use href="#g20" x="589" y="165"/><use href="#g12" x="535" y="188"/><use href="#g2" x="541" y="188"/><use href="#g3" x="547" y="188"/><use href="#g1" x="553" y="188"/><use href="#g11" x="559" y="188"/><use href="#g1" x="565" y="188"/><use href="#g19" x="577" y="188"/><use href="#g18" x="583" y="188"/><use href="#g20" x="589" y="188"/><use href="#g12" x="535" y="210"/><use href="#g2" x="541" y="210"/><use href="#g4" x="547" y="210"/><use href="#g1" x="553" y="210"/><use href="#g11" x="559" y="210"/><use href="#g1" x="565" y="210"/><use href="#g19" x="577" y="210"/><use href="#g18" x="583" y="210"/><use href="#g20" x="589" y="210"/><use href="#g12" x="535" y="233"/><use href="#g2" x="541" y="233"/><use href="#g5" x="547" y="233"/><use href="#g1" x="553" y="233"/><use href="#g11" x="559" y="233"/><use href="#g1" x="565" y="233"/><use href="#g19" x="577" y="233"/><use href="#g18" x="583" y="233"/><use href="#g20" x="589" y="233"/><use href="#g12" x="535" y="255"/><use href="#g2" x="541" y="255"/><use href="#g6" x="547" y="255"/><use href="#g1" x="553" y="255"/><use href="#g11" x="559" y="255"/><use href="#g1" x="565" y="255"/><use href="#g19" x="577" y="255"/><use href="#g18" x="583" y="255"/><use href="#g20" x="589" y="255"/><use href="#g12" x="535" y="278"/><use href="#g2" x="541" y="278"/><use href="#g7" x="547" y="278"/><use href="#g1" x="553" y="278"/><use href="#g11" x="559" y="278"/><use href="#g1" x="565" y="278"/><use href="#g19" x="577" y="278"/><use href="#g18" x="583" y="278"/><use href="#g20" x="589" y="278"/><use href="#g2" x="5" y="290"/><use href="#g14" x="11" y="290"/><use href="#g12" x="17" y="290"/><use href="#g1" x="23" y="290"/><use href="#g4" x="29" y="290"/><use href="#g16" x="41" y="290"/><use href="#g21" x="47" y="290"/><use href="#g2" x="107" y="290"/><use href="#g14" x="113" y="290"/><use href="#g12" x="119" y="290"/><use href="#g1" x="125" y="290"/><use href="#g3" x="131" y="290"/><use href="#g16" x="143" y="290"/><use href="#g21" x="149" y="290"/><use href="#g2" x="209" y="290"/><use href="#g14" x="215" y="290"/><use href="#g12" x="221" y="290"/><use href="#g1" x="227" y="290"/><use href="#g2" x="233" y="290"/><use href="#g16" x="245" y="290"/><use href="#g21" x="251" y="290"/><use href="#g2" x="311" y="290"/><use href="#g14" x="317" y="290"/><use href="#g13" x="323" y="290"/><use href="#g1" x="329" y="290"/><use href="#g1" x="335" y="290"/><use href="#g16" x="347" y="290"/><use href="#g21" x="353" y="290"/><use href="#g2" x="413" y="290"/><use href="#g14" x="419" y="290"/><use href="#g13" x="425" y="290"/><use href="#g1" x="431" y="290"/><use href="#g2" x="437" y="290"/><use href="#g16" x="449" y="290"/><use href="#g21" x="455" y="290"/><use href="#g2" x="515" y="290"/><use href="#g14" x="521" y="290"/><use href="#g13" x="527" y="290"/><use href="#g1" x="533" y="290"/><use href="#g3" x="539" y="290"/><use href="#g16" x="551" y="290"/><use href="#g21" x="557" y="290"/></g><g fill="#003cff"><use href="#g15" x="35" y="268"/><use href="#g15" x="41" y="268"/><use href="#g17" x="47" y="268"/><use href="#g4" x="59" y="268"/><use href="#g3" x="65" y="268"/><use href="#g8" x="71" y="268"/><use href="#g7" x="77" y="268"/><use href="#g9" x="83" y="268"/></g><path fill="#00ff00" d="M25 15h511v1h-511zM25 285h511v1h-511zM25 15h1v271h-1zM535 15h1v271h-1z"/></svg>
<svg class="cv" style="left:9px;top:365px" width="595" height="325" viewBox="0 0 595 325" shape-rendering="crispEdges"><rect width="595" height="325" fill="#000"/><path fill="#005000" d="M25 19h510v1h-510zM25 24h510v1h-510zM25 32h510v1h-510zM25 46h510v1h-510zM25 64h510v1h-510zM25 69h510v1h-510zM25 77h510v1h-510zM25 91h510v1h-510zM25 109h510v1h-510zM25 114h510v1h-510zM25 122h510v1h-510zM25 136h510v1h-510zM25 154h510v1h-510zM25 159h510v1h-510zM25 167h510v1h-510zM25 181h510v1h-510zM25 199h510v1h-510zM25 204h510v1h-510zM25 212h510v1h-510zM25 226h510v1h-510zM25 244h510v1h-510zM25 249h510v1h-510zM25 257h510v1h-510zM25 271h510v1h-510z"/><path fill="#009000" d="M25 60h510v1h-510zM25 105h510v1h-510zM25 150h510v1h-510zM25 195h510v1h-510zM25 240h510v1h-510z"/><path fill="#005000" d="M55 15h1v270h-1zM86 15h1v270h-1zM104 15h1v270h-1zM117 15h1v270h-1zM157 15h1v270h-1zM188 15h1v270h-1zM206 15h1v270h-1zM219 15h1v270h-1zM259 15h1v270h-1zM290 15h1v270h-1zM308 15h1v270h-1zM321 15h1v270h-1zM361 15h1v270h-1zM392 15h1v270h-1zM410 15h1v270h-1zM423 15h1v270h-1zM463 15h1v270h-1zM494 15h1v270h-1zM512 15h1v270h-1zM525 15h1v270h-1z"/><path fill="#008800" d="M127 15h1v270h-1zM229 15h1v270h-1zM331 15h1v270h-1zM433 15h1v270h-1z"/><path fill="#fff" d="M58 57h2v1h-2zM60 58h2v1h-2zM62 59h3v1h-3zM65 60h3v1h-3zM68 61h2v1h-2zM70 62h3v1h-3zM73 63h2v1h-2zM75 64h3v1h-3zM78 65h2v1h-2zM80 66h3v1h-3zM83 67h3v1h-3zM86 68h2v1h-2zM88 69h3v1h-3zM91 70h3v1h-3zM94 71h3v1h-3zM97 72h2v1h-2zM99 73h3v1h-3zM102 74h3v1h-3zM105 75h3v1h-3zM108 76h3v1h-3zM111 77h2v1h-2zM113 78h3v1h-3zM116 79h3v1h-3zM119 80h2v1h-2zM121 81h2v1h-2zM123 82h2v1h-2zM125 83h2v1h-2zM127 84h1v1h-1zM128 85h2v1h-2zM130 86h2v1h-2zM132 87h2v1h-2zM134 88h1v1h-1zM135 89h2v1h-2zM137 90h2v1h-2zM139 91h2v1h-2zM141 92h2v1h-2zM143 93h1v1h-1zM144 94h2v1h-2zM146 95h2v1h-2zM148 96h2v1h-2zM150 97h2v1h-2zM152 98h2v1h-2zM154 99h2v1h-2zM156 100h3v1h-3zM159 101h2v1h-2zM161 102h3v1h-3zM164 103h2v1h-2zM166 104h2v1h-2zM168 105h3v1h-3zM171 106h2v1h-2zM173 107h3v1h-3zM176 108h2v1h-2zM178 109h2v1h-2zM180 110h3v1h-3zM183 111h2v1h-2zM185 112h3v1h-3zM188 113h3v1h-3zM191 114h2v1h-2zM193 115h3v1h-3zM196 116h2v1h-2zM198 117h3v1h-3zM201 118h2v1h-2zM203 119h3v1h-3zM206 120h3v1h-3zM209 121h2v1h-2zM211 122h3v1h-3zM214 123h3v1h-3zM217 124h2v1h-2zM219 125h3v1h-3zM222 126h3v1h-3zM225 127h2v1h-2zM227 128h3v1h-3zM230 129h3v1h-3zM233 130h3v1h-3zM236 131h2v1h-2zM238 132h3v1h-3zM241 133h5v1h-5zM246 134h6v1h-6zM252 135h6v1h-6zM258 136h6v1h-6zM264 137h6v1h-6zM270 138h5v1h-5zM275 139h3v1h-3zM278 140h3v1h-3zM281 141h3v1h-3zM284 142h3v1h-3zM363 142h4v1h-4zM287 143h4v1h-4zM359 143h4v1h-4zM367 143h3v1h-3zM291 144h3v1h-3zM354 144h5v1h-5zM370 144h3v1h-3zM294 145h3v1h-3zM350 145h4v1h-4zM373 145h3v1h-3zM297 146h3v1h-3zM346 146h4v1h-4zM376 146h3v1h-3zM300 147h3v1h-3zM341 147h5v1h-5zM379 147h4v1h-4zM456 147h2v1h-2zM303 148h16v1h-16zM337 148h4v1h-4zM383 148h3v1h-3zM454 148h2v1h-2zM458 148h2v1h-2zM319 149h18v1h-18zM386 149h3v1h-3zM451 149h3v1h-3zM460 149h1v1h-1zM389 150h3v1h-3zM449 150h2v1h-2zM461 150h2v1h-2zM392 151h3v1h-3zM446 151h3v1h-3zM463 151h1v1h-1zM395 152h4v1h-4zM444 152h2v1h-2zM464 152h2v1h-2zM399 153h4v1h-4zM441 153h3v1h-3zM466 153h2v1h-2zM403 154h5v1h-5zM439 154h2v1h-2zM468 154h1v1h-1zM408 155h4v1h-4zM436 155h3v1h-3zM469 155h2v1h-2zM412 156h4v1h-4zM434 156h2v1h-2zM471 156h1v1h-1zM416 157h5v1h-5zM431 157h3v1h-3zM472 157h2v1h-2zM421 158h4v1h-4zM429 158h2v1h-2zM474 158h1v1h-1zM425 159h4v1h-4zM475 159h2v1h-2zM477 160h1v1h-1zM478 161h2v1h-2zM480 162h2v1h-2zM482 163h1v1h-1zM483 164h2v1h-2zM485 165h1v1h-1zM486 166h2v1h-2zM488 167h1v1h-1z"/><g fill="#fff"><use href="#g2" x="545" y="7"/><use href="#g14" x="551" y="7"/><use href="#g12" x="557" y="7"/><use href="#g2" x="563" y="7"/><use href="#g3" x="569" y="7"/><use href="#g2" x="545" y="52"/><use href="#g14" x="551" y="52"/><use href="#g12" x="557" y="52"/><use href="#g2" x="563" y="52"/><use href="#g4" x="569" y="52"/><use href="#g2" x="545" y="97"/><use href="#g14" x="551" y="97"/><use href="#g12" x="557" y="97"/><use href="#g2" x="563" y="97"/><use href="#g5" x="569" y="97"/><use href="#g2" x="545" y="142"/><use href="#g14" x="551" y="142"/><use href="#g12" x="557" y="142"/><use href="#g2" x="563" y="142"/><use href="#g6" x="569" y="142"/><use href="#g2" x="545" y="187"/><use href="#g14" x="551" y="187"/><use href="#g12" x="557" y="187"/><use href="#g2" x="563" y="187"/><use href="#g7" x="569" y="187"/><use href="#g2" x="545" y="232"/><use href="#g14" x="551" y="232"/><use href="#g12" x="557" y="232"/><use href="#g2" x="563" y="232"/><use href="#g8" x="569" y="232"/><use href="#g2" x="545" y="277"/><use href="#g14" x="551" y="277"/><use href="#g12" x="557" y="277"/><use href="#g2" x="563" y="277"/><use href="#g9" x="569" y="277"/><use href="#g2" x="5" y="290"/><use href="#g14" x="11" y="290"/><use href="#g12" x="17" y="290"/><use href="#g1" x="23" y="290"/><use href="#g3" x="29" y="290"/><use href="#g22" x="41" y="290"/><use href="#g23" x="47" y="290"/><use href="#g20" x="53" y="290"/><use href="#g2" x="107" y="290"/><use href="#g14" x="113" y="290"/><use href="#g12" x="119" y="290"/><use href="#g1" x="125" y="290"/><use href="#g2" x="131" y="290"/><use href="#g22" x="143" y="290"/><use href="#g23" x="149" y="290"/><use href="#g20" x="155" y="290"/><use href="#g2" x="209" y="290"/><use href="#g14" x="215" y="290"/><use href="#g13" x="221" y="290"/><use href="#g1" x="227" y="290"/><use href="#g1" x="233" y="290"/><use href="#g22" x="245" y="290"/><use href="#g23" x="251" y="290"/><use href="#g20" x="257" y="290"/><use href="#g2" x="311" y="290"/><use href="#g14" x="317" y="290"/><use href="#g13" x="323" y="290"/><use href="#g1" x="329" y="290"/><use href="#g2" x="335" y="290"/><use href="#g22" x="347" y="290"/><use href="#g23" x="353" y="290"/><use href="#g20" x="359" y="290"/><use href="#g2" x="413" y="290"/><use href="#g14" x="419" y="290"/><use href="#g13" x="425" y="290"/><use href="#g1" x="431" y="290"/><use href="#g3" x="437" y="290"/><use href="#g22" x="449" y="290"/><use href="#g23" x="455" y="290"/><use href="#g20" x="461" y="290"/><use href="#g2" x="515" y="290"/><use href="#g14" x="521" y="290"/><use href="#g13" x="527" y="290"/><use href="#g1" x="533" y="290"/><use href="#g4" x="539" y="290"/><use href="#g22" x="551" y="290"/><use href="#g23" x="557" y="290"/><use href="#g20" x="563" y="290"/></g><path fill="#00ff00" d="M25 15h511v1h-511zM25 285h511v1h-511zM25 15h1v271h-1zM535 15h1v271h-1z"/></svg>

 <!-- right panel -->
 <div class="lab ctr" style="top:27px;letter-spacing:0.45px">Display</div>
 <div class="combo" style="top:42px"><div class="t" style="letter-spacing:0.3px">Ph noise &amp; ADEV</div><div class="sep"></div><svg class="ar" style="" width="7" height="4" viewBox="0 0 7 4" shape-rendering="crispEdges"><path d="M0 0h7v1h-7zM1 1h5v1h-5zM2 2h3v1h-3zM3 3h1v1h-1z"/></svg></div>
 <div class="lab ctr" style="top:73px;letter-spacing:0.5px">Average</div>
 <div class="inp" style="left:617px;top:88px;width:151px"><div class="t">1</div></div>
 <svg class="up" style="left:774px;top:92px" width="7" height="4" viewBox="0 0 7 4" shape-rendering="crispEdges"><path d="M3 0h1v1h-1zM2 1h3v1h-3zM1 2h5v1h-5zM0 3h7v1h-7z"/></svg>
 <svg class="dn" style="left:774px;top:104px" width="7" height="4" viewBox="0 0 7 4" shape-rendering="crispEdges"><path d="M0 0h7v1h-7zM1 1h5v1h-5zM2 2h3v1h-3zM3 3h1v1h-1z"/></svg>
 <div id="info">
  <div style="left:23.8px;top:9.5px;font-size:12.5px;line-height:16px;letter-spacing:0.85px">DF =</div>
  <div style="left:14.4px;top:31px;font-size:15px;line-height:17px">69.98767 uHz</div>
  <div class="m10" style="top:85px">dt =  21.33 ms</div>
  <div class="m10" style="top:102px">F1 =  9.468 kHz</div>
  <div class="m10" style="top:114px">A1 = -2.686 dB</div>
  <div class="m10" style="top:126px">P1 = -75.59 deg</div>
  <div class="m10" style="top:142px">F2 =  9.467 kHz</div>
  <div class="m10" style="top:154px">A2 = -2.588 dB</div>
  <div class="m10" style="top:166px">P2 =  123.4 deg</div>
 </div>
 <!-- checkbox -->
 <div class="b" style="left:618px;top:404px;width:11px;height:11px;border:1px solid #8c8c8c;background:#fff;border-radius:1px">
  <svg class="b" style="left:1px;top:1px" width="9" height="9" viewBox="0 0 9 9"><path d="M1.3 1.3L7.7 7.7M7.7 1.3L1.3 7.7" stroke="#2a2a2a" stroke-width="2.8" stroke-linecap="round" fill="none"/></svg>
 </div>
 <div class="lab" style="left:637px;top:403px;letter-spacing:0.5px">Downconvert</div>
 <div class="lab" style="left:616.5px;top:429px;letter-spacing:0.65px">Carrier</div>
 <div class="inp" style="left:663px;top:424px;width:86px"><div class="t" style="letter-spacing:0.75px;left:3.2px">500000000</div></div>
 <svg class="up" style="left:755px;top:428px" width="7" height="4" viewBox="0 0 7 4" shape-rendering="crispEdges"><path d="M3 0h1v1h-1zM2 1h3v1h-3zM1 2h5v1h-5zM0 3h7v1h-7z"/></svg>
 <svg class="dn" style="left:755px;top:440px" width="7" height="4" viewBox="0 0 7 4" shape-rendering="crispEdges"><path d="M0 0h7v1h-7zM1 1h5v1h-5zM2 2h3v1h-3zM3 3h1v1h-1z"/></svg>
 <div class="lab" style="left:765px;top:429px;letter-spacing:0.6px">Hz</div>
 <div class="lab ctr" style="top:452px;letter-spacing:0.4px">FFT size</div>
 <div class="combo" style="top:467px"><div class="t" style="letter-spacing:0.8px">1024</div><div class="sep"></div><svg class="ar" style="" width="7" height="4" viewBox="0 0 7 4" shape-rendering="crispEdges"><path d="M0 0h7v1h-7zM1 1h5v1h-5zM2 2h3v1h-3zM3 3h1v1h-1z"/></svg></div>
 <div class="lab ctr" style="top:496px;letter-spacing:0.5px">Sample rate</div>
 <div class="combo" style="top:511px"><div class="t" style="letter-spacing:0.8px">48kHz</div><div class="sep"></div><svg class="ar" style="" width="7" height="4" viewBox="0 0 7 4" shape-rendering="crispEdges"><path d="M0 0h7v1h-7zM1 1h5v1h-5zM2 2h3v1h-3zM3 3h1v1h-1z"/></svg></div>
 <div class="lab ctr" style="top:540px;letter-spacing:0.5px">Device</div>
 <div class="combo" style="top:555px"><div class="t" style="letter-spacing:0.4px">/dev/dsp</div><div class="sep"></div><svg class="ar" style="" width="7" height="4" viewBox="0 0 7 4" shape-rendering="crispEdges"><path d="M0 0h7v1h-7zM1 1h5v1h-5zM2 2h3v1h-3zM3 3h1v1h-1z"/></svg></div>
 <div class="combo" style="top:631px;height:22px;background:linear-gradient(#fefefe 0,#f4f4f4 50%,#e9e9e9 55%,#e2e2e2 100%)"><div class="lab" style="left:1px;width:167px;top:4px;text-align:center;letter-spacing:0.3px">EXIT</div></div>
</div>
</body></html>
